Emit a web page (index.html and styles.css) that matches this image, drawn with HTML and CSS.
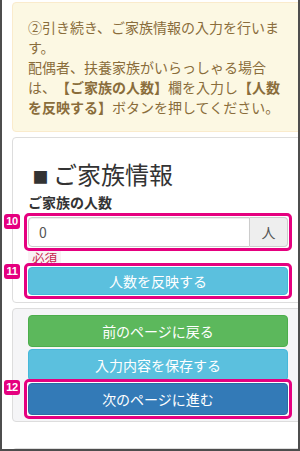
FILE: index.html
```html
<!DOCTYPE html>
<html lang="ja">
<head>
<meta charset="utf-8">
<link rel="stylesheet" href="styles.css">
</head>
<body>
<div class="frame">
  <div class="content">
    <div class="alert">②引き続き、ご家族情報の入力を行います。<br>配偶者、扶養家族がいらっしゃる場合は、<b>【ご家族の人数】</b>欄を入力し<b>【人数を反映する】</b>ボタンを押してください。</div>
    <div class="panel">
      <div class="panel-body">
        <h3 class="heading"><span class="sq">■</span>ご家族情報</h3>
        <div class="field-label">ご家族の人数</div>
        <div class="input-group annot">
          <div class="input">0</div>
          <div class="addon">人</div>
          <span class="badge">10</span>
        </div>
        <div class="req"><span class="code">必須</span></div>
        <div class="annot">
          <div class="btn btn-info btn-reflect">人数を反映する</div>
          <span class="badge">11</span>
        </div>
      </div>
    </div>
    <div class="panel panel-footer">
      <div class="btn btn-success">前のページに戻る</div>
      <div class="btn btn-info">入力内容を保存する</div>
      <div class="annot">
        <div class="btn btn-primary">次のページに進む</div>
        <span class="badge">12</span>
      </div>
    </div>
    <div class="panel panel-next"></div>
  </div>
</div>
</body>
</html>
```
FILE: styles.css
```css
html, body {
  margin: 0;
  padding: 0;
  background: #fff;
}
body {
  font-family: "Noto Sans CJK JP", "Noto Sans", sans-serif;
  font-size: 14px;
  line-height: 20px;
  color: #333;
  text-spacing-trim: space-all;
}
.frame {
  width: 300px;
  height: 451px;
  box-sizing: border-box;
  border-left: 2px solid #4d4d4d;
  border-right: 2px solid #4d4d4d;
  border-bottom: 2px solid #4d4d4d;
  overflow: hidden;
  background: #fff;
}
.content {
  width: 292px;
  margin-left: 10px;
  padding-top: 2px;
}
.alert {
  box-sizing: border-box;
  background: #fcf8e3;
  border: 1px solid #faebcc;
  border-radius: 4px;
  color: #8a6d3b;
  padding: 14px 15px;
  margin-bottom: 5px;
  text-spacing-trim: space-all;
}
.alert b {
  font-weight: bold;
}
.panel {
  border: 1px solid #ddd;
  border-radius: 4px;
  background: #fff;
  margin-bottom: 5px;
}
.panel-body {
  padding: 15px 15px 7px;
}
.heading {
  margin: 8px 0 3px;
  font-size: 24px;
  line-height: 26px;
  font-weight: 400;
  color: #333;
}
.sq {
  display: inline-block;
  width: 25px;
  font-size: 16px;
  text-align: center;
  vertical-align: 1px;
}
.field-label {
  font-weight: bold;
  margin-bottom: 5px;
}
.annot {
  position: relative;
}
.annot::after {
  content: "";
  position: absolute;
  left: -4px;
  right: -4px;
  top: -4px;
  bottom: -4px;
  border: 3px solid #e5007f;
  border-radius: 5px;
  box-shadow: inset 0 0 0 1px #fff;
  pointer-events: none;
}
.badge {
  position: absolute;
  left: -24px;
  top: -3px;
  width: 16px;
  height: 15px;
  background: #e5007f;
  color: #fff;
  font-family: "Liberation Sans", Arial, sans-serif;
  font-weight: bold;
  font-size: 11px;
  line-height: 15px;
  text-align: center;
  border-radius: 3px;
  letter-spacing: -0.3px;
}
.input-group {
  display: flex;
  height: 30px;
}
.input {
  flex: 1;
  box-sizing: border-box;
  border: 1px solid #ccc;
  border-radius: 4px 0 0 4px;
  padding: 0 10px;
  line-height: 28px;
  color: #555;
  background: #fff;
  box-shadow: inset 0 1px 1px rgba(0,0,0,.075);
}
.addon {
  width: 38px;
  box-sizing: border-box;
  border: 1px solid #ccc;
  border-left: 0;
  border-radius: 0 4px 4px 0;
  background: #eee;
  color: #555;
  text-align: center;
  line-height: 28px;
}
.req {
  height: 16px;
  line-height: 16px;
  margin: 2px 0 2px;
}
.code {
  font-size: 12.6px;
  color: #c7254e;
  background: #f9f2f4;
  padding: 0 4px;
  border-radius: 3px;
}
.btn {
  box-sizing: border-box;
  height: 32px;
  line-height: 30px;
  border: 1px solid transparent;
  border-radius: 4px;
  color: #fff;
  text-align: center;
  font-size: 14px;
}
.btn-reflect {
  height: 28px;
  line-height: 26px;
}
.btn-info {
  background: #5bc0de;
  border-color: #46b8da;
}
.btn-success {
  background: #5cb85c;
  border-color: #4cae4c;
}
.btn-primary {
  background: #337ab7;
  border-color: #2e6da4;
}
.panel-footer {
  background: #f5f5f7;
  padding: 6px 15px;
  display: flex;
  flex-direction: column;
  gap: 2px;
}
.panel-next {
  margin-top: 26px;
  height: 40px;
}
```
